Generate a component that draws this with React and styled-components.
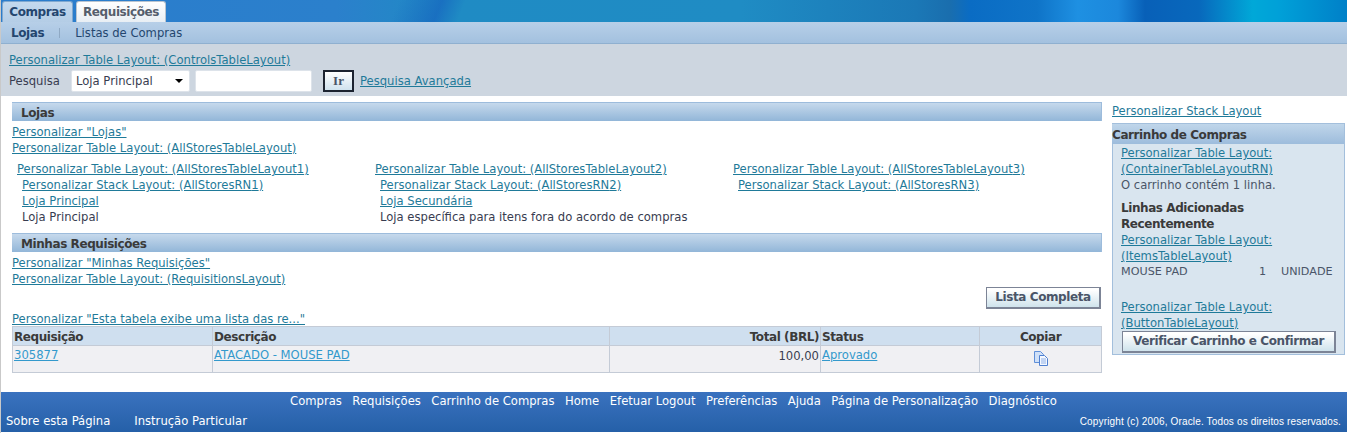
import React from "react";
import styled, { createGlobalStyle, css } from "styled-components";

const GlobalStyle = createGlobalStyle`
  html, body { margin: 0; padding: 0; background: #fff; }
  body { font-family: "DejaVu Sans", sans-serif; font-size: 11.6px; color: #383c50; }
`;

// DejaVu bold is wider than the reference's bold, so it is tightened a little
const boldText = css`
  font-family: "DejaVu Sans", sans-serif;
  font-weight: bold;
  font-size: 12px;
  letter-spacing: -0.42px;
`;

const Page = styled.div`
  width: 1347px;
  height: 433px;
  overflow: hidden;
  display: flex;
  flex-direction: column;
  background: #fff;
  border-left: 1px solid #c9c9c9;
  box-sizing: border-box;
`;

const Banner = styled.div`
  height: 22px;
  margin-left: -1px;
  padding-left: 2px;
  display: flex;
  align-items: flex-end;
  gap: 3px;
  background:
    linear-gradient(112deg, rgba(20, 90, 190, 0) 370px, rgba(20, 90, 190, 0.55) 410px, rgba(20, 90, 190, 0) 432px),
    linear-gradient(90deg, #2a7ccc 0%, #2b80cc 25%, #1f8bc4 33%, #1f8cc4 55%, #1b78b6 68%, #1a6eae 70.5%, #0a6cc4 72%, #0f74c8 77%, #1e90e2 80%, #1c88dc 83%, #0860b8 85%, #0868bc 89%, #00a8d8 93%, #00a0d8 95%, #0080c8 100%);
`;

const Tab = styled.div`
  ${boldText}
  width: ${(p) => p.$width}px;
  height: 21px;
  box-sizing: border-box;
  padding-top: 3px;
  text-align: center;
  border: 1px solid ${(p) => (p.$active ? "#7fa8d0" : "#b9c4d0")};
  border-bottom: none;
  border-radius: 3px 3px 0 0;
  color: ${(p) => (p.$active ? "#24466f" : "#555e6c")};
  background: ${(p) => (p.$active ? "linear-gradient(#c4d9ee, #b4cde6)" : "linear-gradient(#ffffff, #e8eef4)")};
`;

const SubNav = styled.div`
  height: 22px;
  box-sizing: border-box;
  display: flex;
  align-items: center;
  padding-left: 10px;
  background: linear-gradient(#b7cfe8, #a3c1df);
  border-bottom: 1px solid #8fb0d0;
`;

const SubItem = styled.span`
  font-size: 11.6px;
  color: #24466f;
`;

const SubItemActive = styled.span`
  ${boldText}
  color: #24466f;
`;

const SubSep = styled.span`
  width: 1px;
  height: 10px;
  margin: 0 15px;
  background: #8fa9c4;
`;

const SearchBar = styled.div`
  height: 52px;
  box-sizing: border-box;
  padding: 8px 0 0 8px;
  background: #cdd6e0;
`;

const Link = styled.a`
  color: ${(p) => (p.$light ? "#3399cc" : "#1f7a99")};
  text-decoration: underline;
  font-size: 11.6px;
  line-height: 16px;
  white-space: nowrap;
`;

const SearchRow = styled.div`
  display: flex;
  align-items: center;
  margin-top: 2px;
  font-size: 11.6px;
`;

const SearchLabel = styled.span`
  width: 62px;
`;

const SelectBox = styled.div`
  width: 119px;
  height: 22px;
  box-sizing: border-box;
  display: flex;
  align-items: center;
  justify-content: space-between;
  padding: 0 5px 0 4px;
  background: #fff;
  border: 1px solid #dde3ea;
  border-radius: 2px;
`;

const Arrow = styled.span`
  width: 0;
  height: 0;
  margin-right: 1px;
  border-left: 4px solid transparent;
  border-right: 4px solid transparent;
  border-top: 4px solid #000;
`;

const TextBox = styled.div`
  width: 117px;
  height: 22px;
  margin-left: 5px;
  box-sizing: border-box;
  background: #fff;
  border: 1px solid #dde3ea;
  border-radius: 2px;
`;

const GoButton = styled.div`
  width: 31px;
  height: 22px;
  margin: 0 6px 0 11px;
  box-sizing: border-box;
  border: 2px solid #1c2330;
  display: flex;
  align-items: center;
  justify-content: center;
  font: bold 13px "Liberation Serif", serif;
  color: #4a5568;
  background: linear-gradient(#ffffff, #cfe2ee);
`;

const Content = styled.div`
  flex: 1;
  display: flex;
  padding: 6px 1px 0 11px;
  gap: 10px;
`;

const Main = styled.div`
  width: 1090px;
`;

const Side = styled.div`
  width: 233px;
`;

const SectionHead = styled.div`
  ${boldText}
  height: 19px;
  line-height: 20px;
  box-sizing: border-box;
  padding-left: 9px;
  border-top: 1px solid #9dbcdc;
  border-right: 1px solid #9dbcdc;
  color: #3a3a3a;
  background: linear-gradient(#c6d9ec, #92b6d8);
`;

const LinkStack = styled.div`
  display: flex;
  flex-direction: column;
  align-items: flex-start;
  margin-top: ${(p) => p.$top || 0}px;
  padding-left: ${(p) => p.$indent || 0}px;
`;

const StoreGrid = styled.div`
  display: grid;
  grid-template-columns: repeat(3, 358px);
  margin: 5px 0 8px 5px;
`;

const Plain = styled.span`
  font-size: 11.6px;
  line-height: 16px;
  color: ${(p) => p.$color || "#383c50"};
  white-space: nowrap;
`;

const ButtonRow = styled.div`
  display: flex;
  justify-content: flex-end;
  margin: 0 1px 1px 0;
`;

const ActionButton = styled.div`
  ${boldText}
  height: 22px;
  line-height: 19px;
  width: ${(p) => p.$width}px;
  margin-left: ${(p) => p.$left || 0}px;
  box-sizing: border-box;
  text-align: center;
  border: 1px solid #7c8496;
  border-width: 1px 2px 2px 1px;
  color: #4a5568;
  white-space: nowrap;
  background: linear-gradient(#ffffff 10%, #cfe3ec);
`;

const TableCaption = styled.div`
  height: 16px;
  margin-top: 1px;
  padding-top: 1px;
  box-sizing: border-box;
  display: flex;
`;

const Table = styled.div`
  display: grid;
  grid-template-columns: 200px 397px 211px 159px 122px;
  grid-template-rows: 19px 27px;
  box-sizing: border-box;
  border-top: 1px solid #c4cbd6;
  border-left: 1px solid #c4cbd6;
`;

const HeadCell = styled.div`
  ${boldText}
  line-height: 20px;
  box-sizing: border-box;
  padding: 0 1px;
  text-align: ${(p) => p.$align || "left"};
  color: #3a3a3a;
  background: #cfdfef;
  border-right: 1px solid #c4cbd6;
  border-bottom: 1px solid #c4cbd6;
`;

const BodyCell = styled.div`
  box-sizing: border-box;
  padding: 1px 1px 0;
  display: flex;
  justify-content: ${(p) => p.$justify || "flex-start"};
  font-size: 11.6px;
  line-height: 18px;
  background: #f0f0f3;
  border-right: 1px solid #c4cbd6;
  border-bottom: 1px solid #c4cbd6;
`;

const CopyIcon = styled.svg`
  margin-top: 3px;
`;

const Panel = styled.div`
  margin-top: 4px;
  height: 232px;
  box-sizing: border-box;
  border: 1px solid #a3bfdc;
  background: #d9e5ef;
`;

const PanelHead = styled.div`
  ${boldText}
  height: 20px;
  line-height: 22px;
  margin-left: -1px;
  color: #3a3a3a;
  background: linear-gradient(#c0d6ea, #9dbcdc);
`;

const PanelBody = styled.div`
  padding: 1px 0 0 8px;
`;

const PanelTitle = styled.div`
  ${boldText}
  line-height: 16px;
  margin-top: 7px;
  width: 180px;
  color: #3a3a3a;
`;

const CartLine = styled.div`
  display: grid;
  grid-template-columns: 138px 22px auto;
  font-size: 11.2px;
  line-height: 16px;
  color: #4a5568;
`;

const Footer = styled.div`
  height: 40px;
  margin-left: -1px;
  margin-bottom: 1px;
  box-sizing: border-box;
  padding-top: 1px;
  background: linear-gradient(#3a72bf, #2560a8);
  color: #fff;
  font-size: 11.6px;
`;

const FooterLinks = styled.div`
  display: flex;
  justify-content: center;
  gap: 10.5px;
  line-height: 16px;
`;

const FooterBottom = styled.div`
  display: flex;
  align-items: center;
  padding: 4px 6px 0 6px;
  line-height: 16px;
  gap: 24px;
`;

const Copyright = styled.span`
  margin-left: auto;
  font: 10px "Liberation Sans", sans-serif;
  letter-spacing: 0.15px;
`;

const Tl = ({ children, light }) => <Link $light={light}>{children}</Link>;

const stores = [
  { n: 1, name: "Loja Principal", desc: "Loja Principal" },
  { n: 2, name: "Loja Secundária", desc: "Loja específica para itens fora do acordo de compras" },
  { n: 3 },
];

export default function App() {
  return (
    <Page>
      <GlobalStyle />
      <Banner>
        <Tab $active $width={71}>Compras</Tab>
        <Tab $width={90}>Requisições</Tab>
      </Banner>
      <SubNav>
        <SubItemActive>Lojas</SubItemActive>
        <SubSep />
        <SubItem>Listas de Compras</SubItem>
      </SubNav>
      <SearchBar>
        <Tl>Personalizar Table Layout: (ControlsTableLayout)</Tl>
        <SearchRow>
          <SearchLabel>Pesquisa</SearchLabel>
          <SelectBox>
            Loja Principal
            <Arrow />
          </SelectBox>
          <TextBox />
          <GoButton>Ir</GoButton>
          <Tl>Pesquisa Avançada</Tl>
        </SearchRow>
      </SearchBar>
      <Content>
        <Main>
          <SectionHead>Lojas</SectionHead>
          <LinkStack $top={3}>
            <Tl>Personalizar "Lojas"</Tl>
            <Tl>Personalizar Table Layout: (AllStoresTableLayout)</Tl>
          </LinkStack>
          <StoreGrid>
            {stores.map((s) => (
              <div key={s.n}>
                <Tl>Personalizar Table Layout: (AllStoresTableLayout{s.n})</Tl>
                <LinkStack $indent={5}>
                  <Tl>Personalizar Stack Layout: (AllStoresRN{s.n})</Tl>
                  {s.name && <Tl>{s.name}</Tl>}
                  {s.desc && <Plain>{s.desc}</Plain>}
                </LinkStack>
              </div>
            ))}
          </StoreGrid>
          <SectionHead>Minhas Requisições</SectionHead>
          <LinkStack $top={3}>
            <Tl>Personalizar "Minhas Requisições"</Tl>
            <Tl>Personalizar Table Layout: (RequisitionsLayout)</Tl>
          </LinkStack>
          <ButtonRow>
            <ActionButton $width={115}>Lista Completa</ActionButton>
          </ButtonRow>
          <TableCaption>
            <Tl>Personalizar "Esta tabela exibe uma lista das re..."</Tl>
          </TableCaption>
          <Table>
            <HeadCell>Requisição</HeadCell>
            <HeadCell>Descrição</HeadCell>
            <HeadCell $align="right">Total (BRL)</HeadCell>
            <HeadCell>Status</HeadCell>
            <HeadCell $align="center">Copiar</HeadCell>
            <BodyCell><Tl light>305877</Tl></BodyCell>
            <BodyCell><Tl light>ATACADO - MOUSE PAD</Tl></BodyCell>
            <BodyCell $justify="flex-end">100,00</BodyCell>
            <BodyCell><Tl light>Aprovado</Tl></BodyCell>
            <BodyCell $justify="center">
              <CopyIcon width="16" height="17" viewBox="0 0 16 17">
                <path d="M1.5 1.5h6l3 3v8h-9z" fill="#cfe0f8" stroke="#5f8fd8" />
                <path d="M6.5 5.5h5l3 3v7h-8z" fill="#f4f8ff" stroke="#4f80d0" />
                <path d="M8 9h5M8 11h5M8 13h5" stroke="#8fb0e6" />
              </CopyIcon>
            </BodyCell>
          </Table>
        </Main>
        <Side>
          <LinkStack $top={1}>
            <Tl>Personalizar Stack Layout</Tl>
          </LinkStack>
          <Panel>
            <PanelHead>Carrinho de Compras</PanelHead>
            <PanelBody>
              <LinkStack>
                <Tl>Personalizar Table Layout:</Tl>
                <Tl>(ContainerTableLayoutRN)</Tl>
                <Plain $color="#4a5568">O carrinho contém 1 linha.</Plain>
              </LinkStack>
              <PanelTitle>Linhas Adicionadas Recentemente</PanelTitle>
              <LinkStack>
                <Tl>Personalizar Table Layout:</Tl>
                <Tl>(ItemsTableLayout)</Tl>
              </LinkStack>
              <CartLine>
                <span>MOUSE PAD</span>
                <span>1</span>
                <span>UNIDADE</span>
              </CartLine>
              <LinkStack $top={19}>
                <Tl>Personalizar Table Layout:</Tl>
                <Tl>(ButtonTableLayout)</Tl>
              </LinkStack>
              <ActionButton $width={214} $left={1}>
                Verificar Carrinho e Confirmar
              </ActionButton>
            </PanelBody>
          </Panel>
        </Side>
      </Content>
      <Footer>
        <FooterLinks>
          {["Compras", "Requisições", "Carrinho de Compras", "Home", "Efetuar Logout", "Preferências", "Ajuda", "Página de Personalização", "Diagnóstico"].map((t) => (
            <span key={t}>{t}</span>
          ))}
        </FooterLinks>
        <FooterBottom>
          <span>Sobre esta Página</span>
          <span>Instrução Particular</span>
          <Copyright>Copyright (c) 2006, Oracle. Todos os direitos reservados.</Copyright>
        </FooterBottom>
      </Footer>
    </Page>
  );
}
